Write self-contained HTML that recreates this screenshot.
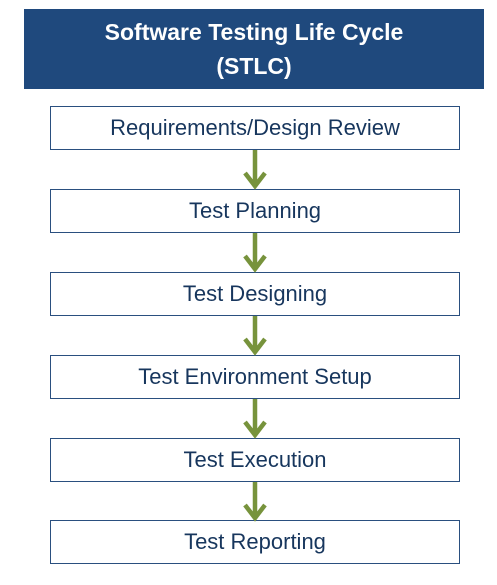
<!DOCTYPE html><html><head><style>
body{margin:0;width:497px;height:585px;background:#fff;position:relative;font-family:"Liberation Sans",sans-serif;overflow:hidden}
.h{position:absolute;left:24px;top:9px;width:460px;height:80px;background:#1f497d;color:#fff;font-weight:bold;font-size:23px;text-align:center;line-height:34px;padding-top:6px;box-sizing:border-box}
.b{position:absolute;left:50px;width:410px;height:44px;border:1.5px solid #2a4f7f;box-sizing:border-box;color:#17365d;font-size:22px;text-align:center;line-height:41px}
svg{position:absolute;left:0;top:0}
</style></head><body>
<div class="h">Software Testing Life Cycle<br>(STLC)</div>
<div class="b" style="top:106px">Requirements/Design Review</div>
<div class="b" style="top:189px">Test Planning</div>
<div class="b" style="top:272px">Test Designing</div>
<div class="b" style="top:355px">Test Environment Setup</div>
<div class="b" style="top:438px">Test Execution</div>
<div class="b" style="top:520px">Test Reporting</div>
<svg width="497" height="585" fill="none" stroke="#77933c" stroke-width="4.5">
<g id="a"><path d="M255 150V187M245 173L255 186L265 173"/></g>
<use href="#a" y="83"/><use href="#a" y="166"/><use href="#a" y="249"/><use href="#a" y="332"/>
</svg>
</body></html>
